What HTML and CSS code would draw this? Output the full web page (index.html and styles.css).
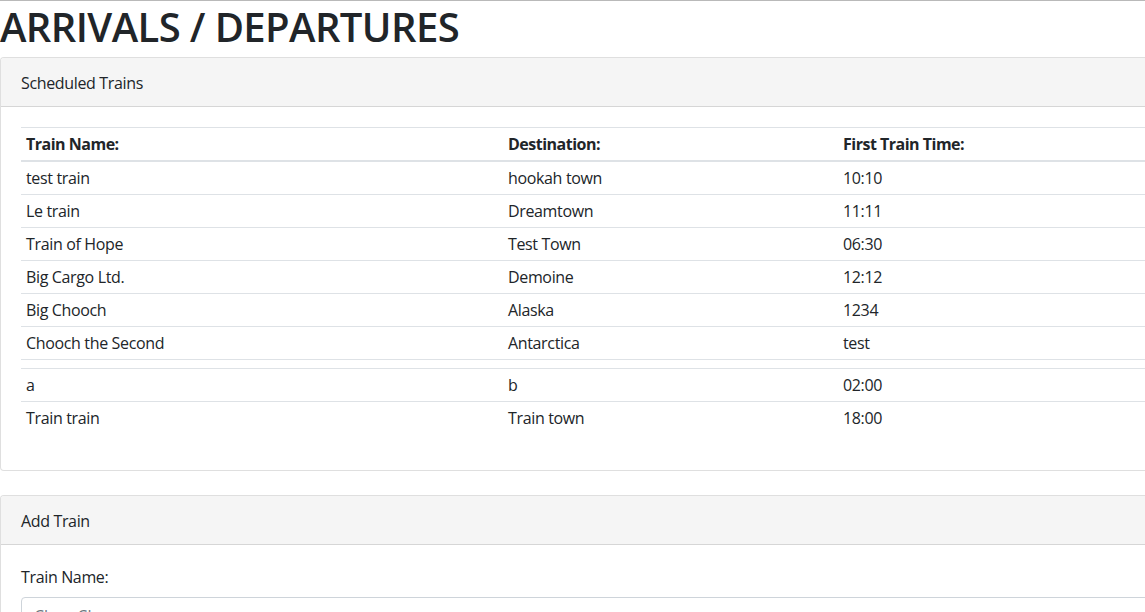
FILE: index.html
```html
<!DOCTYPE html>
<html lang="en">
<head>
<meta charset="utf-8">
<title>Train Scheduler</title>
<link rel="stylesheet" href="styles.css">
</head>
<body>
<div class="page">
  <h1 class="title">ARRIVALS / DEPARTURES</h1>

  <section class="card">
    <div class="card-header">Scheduled Trains</div>
    <div class="card-body">
      <table class="table">
        <colgroup>
          <col class="c1"><col class="c2"><col class="c3">
        </colgroup>
        <thead>
          <tr><th>Train Name:</th><th>Destination:</th><th>First Train Time:</th></tr>
        </thead>
        <tbody>
          <tr><td>test train</td><td>hookah town</td><td>10:10</td></tr>
          <tr><td>Le train</td><td>Dreamtown</td><td>11:11</td></tr>
          <tr><td>Train of Hope</td><td>Test Town</td><td>06:30</td></tr>
          <tr><td>Big Cargo Ltd.</td><td>Demoine</td><td>12:12</td></tr>
          <tr><td>Big Chooch</td><td>Alaska</td><td>1234</td></tr>
          <tr><td>Chooch the Second</td><td>Antarctica</td><td>test</td></tr>
          <tr class="empty"><td></td><td></td><td></td></tr>
          <tr><td>a</td><td>b</td><td>02:00</td></tr>
          <tr><td>Train train</td><td>Train town</td><td>18:00</td></tr>
        </tbody>
      </table>
    </div>
  </section>

  <section class="card">
    <div class="card-header">Add Train</div>
    <div class="card-body">
      <form class="form">
        <div class="form-group">
          <label class="label" for="train-name">Train Name:</label>
          <input class="input" id="train-name" type="text" placeholder="Choo Choo">
        </div>
      </form>
    </div>
  </section>
</div>
</body>
</html>
```

FILE: styles.css
```css
html, body {
  margin: 0;
  padding: 0;
  overflow: hidden;
  background: #fff;
}

body {
  font-family: "Open Sans", "Noto Sans", "Liberation Sans", sans-serif;
  font-size: 16px;
  line-height: 1.5;
  letter-spacing: -0.35px;
  color: #212529;
  border-top: 1px solid #b9b9b9;
}

.page {
  width: 1400px;
}

.title {
  margin: 0 0 6px 0;
  padding-top: 2px;
  font-size: 40px;
  line-height: 48px;
  font-weight: 600;
  letter-spacing: -0.6px;
  color: #212529;
}

.card {
  border: 1px solid rgba(0, 0, 0, 0.125);
  border-radius: 4px;
  margin-bottom: 24px;
  background: #fff;
}

.card-header {
  background: #f5f5f5;
  padding: 13px 20px 11px;
  border-bottom: 1px solid rgba(0, 0, 0, 0.125);
  border-radius: 3px 3px 0 0;
}

.card-body {
  padding: 20px;
}

.table {
  width: 100%;
  border-collapse: collapse;
  table-layout: fixed;
  margin-bottom: 16px;
}

.c1 { width: 482px; }
.c2 { width: 335px; }

.table th,
.table td {
  padding: 4px 5px;
  text-align: left;
  vertical-align: top;
  border-top: 1px solid #dee2e6;
}

.table th {
  font-weight: 700;
  letter-spacing: -0.5px;
  border-bottom: 2px solid #dee2e6;
}

.table tbody tr:first-child td {
  border-top: 0;
}

.table .empty td {
  height: 0;
  line-height: 0;
}

.form-group {
  margin-bottom: 16px;
}

.label {
  display: block;
  margin-bottom: 8px;
}

.input {
  display: block;
  width: 100%;
  box-sizing: border-box;
  height: 38px;
  padding: 6px 12px;
  font: inherit;
  color: #495057;
  border: 1px solid #ced4da;
  border-radius: 4px;
}

.input::placeholder {
  color: #6c757d;
}
```
